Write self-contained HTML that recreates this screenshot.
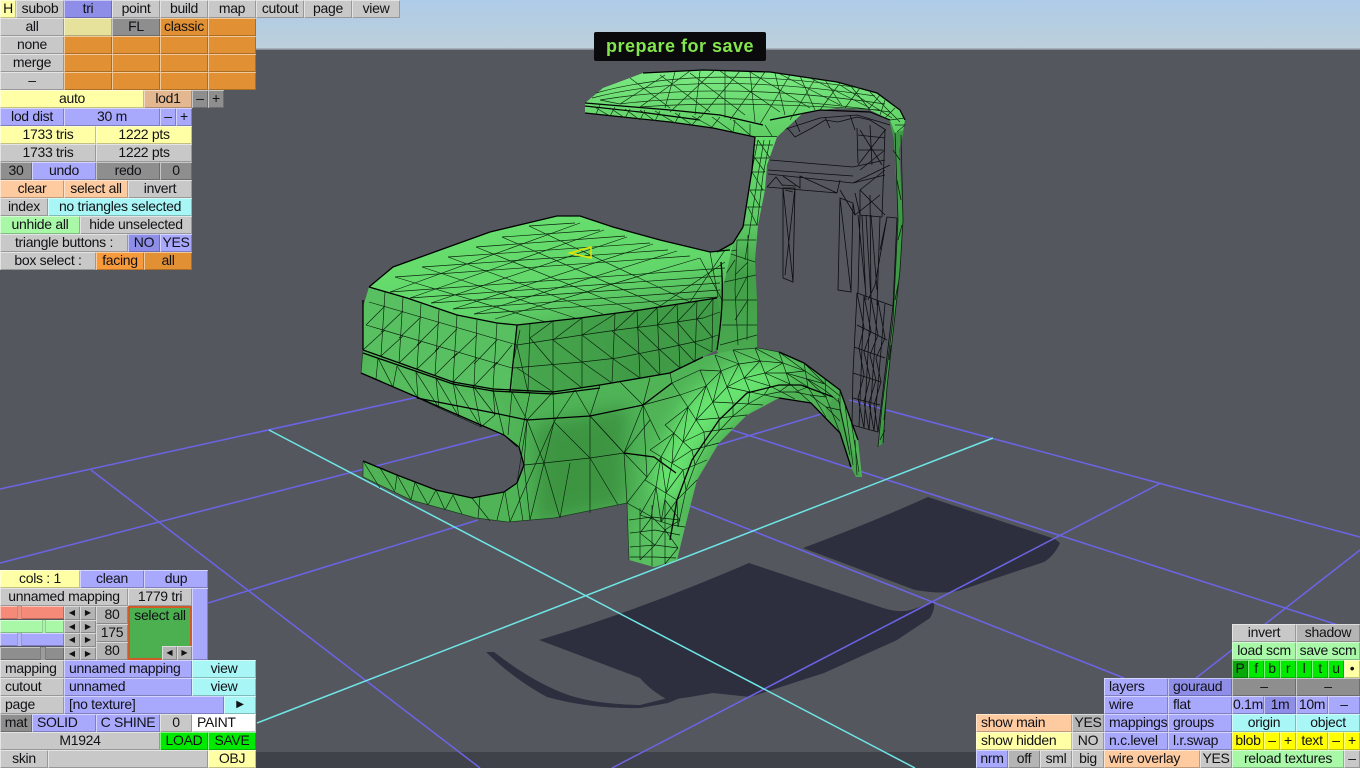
<!DOCTYPE html>
<html><head><meta charset="utf-8"><title>Mesh editor</title>
<style>
html,body{margin:0;padding:0;width:1360px;height:768px;overflow:hidden;background:#55575f}
#w{position:absolute;left:0;top:0;width:1360px;height:768px;overflow:hidden;filter:blur(.3px)}
#s{position:absolute;left:0;top:0}
i{position:absolute;height:18px;box-sizing:border-box;text-align:center;font:14px/17px "Liberation Sans",sans-serif;letter-spacing:-.3px;font-style:normal;color:#121216;white-space:pre;overflow:hidden;box-shadow:inset 1px 1px 0 rgba(255,255,255,.5),inset -1px -1px 0 rgba(0,0,0,.24)}
.g{background:#c8c8c8}.d{background:#8e8e8e}.b{background:#a8a8fc}.B{background:#8e8ee8}.y{background:#ffffa6}.p{background:#fdcb9f}.c{background:#a8f6f6}.n{background:#a8f8a8}.o{background:#e29034}.O{background:#f79a3c}.t{background:#e3b78f}.Y{background:#ffff00}.G{background:#00ea00}.W{background:#fff}.e{background:#e6e29c}.a{background:#b4b4b4}.D{background:#08a808}
.l{text-align:left;padding-left:5px}
.s{height:13.5px;line-height:13px;font-size:8px;letter-spacing:0}
.k{box-shadow:none}
</style></head><body><div id="w">
<svg id="s" width="1360" height="768" viewBox="0 0 1360 768">
<defs>
<linearGradient id="sky" x1="0" y1="0" x2="0" y2="1"><stop offset="0" stop-color="#aecbe8"/><stop offset="1" stop-color="#bdd0da"/></linearGradient>
<linearGradient id="top" x1="0" y1="0" x2=".75" y2="1"><stop offset="0" stop-color="#6ae270"/><stop offset=".7" stop-color="#62d66a"/><stop offset="1" stop-color="#4ba952"/></linearGradient>
<linearGradient id="fr" x1="0" y1="0" x2="1" y2="0"><stop offset="0" stop-color="#48a84e"/><stop offset=".6" stop-color="#3f9a46"/><stop offset="1" stop-color="#419c47"/></linearGradient>
<linearGradient id="ro" x1="0" y1="0" x2="0" y2="1"><stop offset="0" stop-color="#7cea82"/><stop offset="1" stop-color="#5ccc63"/></linearGradient>
<linearGradient id="pi" x1="0" y1="0" x2="0" y2="1"><stop offset="0" stop-color="#66dc6d"/><stop offset=".4" stop-color="#5cc864"/><stop offset=".62" stop-color="#429e48"/><stop offset="1" stop-color="#4aaa50"/></linearGradient>
<filter id="bl" x="-30%" y="-30%" width="160%" height="160%"><feGaussianBlur stdDeviation="9"/></filter>
<clipPath id="cb"><path d="M361 373L363 350L453 382L493 389L553 392L600 385L670 373L703 357L733 350L758 348L779 352L804 363L840 390L858 440L862 477L856 477L851 467L840 433L811 403L779 398L747 415L719 443L697 480L685 527L677 560L654 567L629 560L627 503L554 518L508 522L476 518L411 500L363 477L363 461L397 475L436 490L472 498L504 492L517 483L524 465L519 447L504 435L419 398Z"/></clipPath>
</defs>
<rect width="1360" height="49" fill="url(#sky)"/>
<rect y="48.5" width="1360" height="1.5" fill="#8a8f98"/>
<rect y="50" width="1360" height="702" fill="#55575f"/>
<rect x="0" y="752" width="1360" height="16" fill="#404249"/>
<!-- shadows -->
<g fill="#2d2f3e">
<path d="M928 497L1055 539L1060 543Q1054 556 1044 562L961 590Q945 595 915 590L803 548Q870 523 928 497Z"/>
<path d="M749 563L883 608Q900 613 911 610L934 602Q935 610 930 618L897 640L824 673L750 697L713 693L690 697L668 700Q650 690 640 678L539 640Q640 610 749 563Z"/>
<path d="M486 652L494 652Q530 680 563 693Q590 704 640 705L668 698L680 698L668 703L640 708Q590 709 547 697Q515 680 486 652Z"/>
</g>
<!-- grid -->
<g stroke="#6c64e6" stroke-width="1.5" fill="none">
<path d="M0 489L418 397M0 563L504 433M208 603L478 520M718 445L828 412M91 470L480 768"/>
<path d="M849 400L1360 537M732 430L1338 625M690 506L1124 678M612 768L1161 483M1196 678L1360 550"/>
</g>
<g stroke="#6fe6e6" stroke-width="1.5" fill="none">
<path d="M269 430L915 768M257 723L993 438"/>
</g>
<!-- wire-only rear structure -->
<g stroke="#0c0c10" stroke-width=".8" fill="none">
<path d="M783 130L820 118L857 115L890 125M785 125L795 137L812 128L825 120L838 122L857 117L870 120L886 130M795 120L800 132M825 117L830 128M850 115L855 130"/>
<path d="M857 128L858 163M860 130L882 165M885 130L858 165M885 130L882 217M870 125L872 165M858 135L885 138M858 150L883 150"/>
<path d="M770 160L853 167L885 160M768 170L853 176M768 174L853 183L885 175M767 187L837 193M767 187L776 177L783 186M783 176L800 188L800 176L837 193M837 193L840 180M853 183L890 165M860 170L885 150M885 170L860 190L885 215M860 190L860 215L882 217"/>
<path d="M783 188L795 188L793 282L783 278ZM783 188L793 282M795 188L785 275M783 185L796 186M785 190L793 192"/>
<path d="M840 198L853 203L851 292L838 290ZM840 198L851 292M853 203L855 215M840 190L855 215L880 195"/>
<path d="M855 193L860 215L858 293M862 215L866 300M870 195L871 300M880 217L877 305M858 215L866 295M866 215L871 300M871 215L877 290M887 217L875 285L868 300M897 218L887 217L880 250M897 218L893 306"/>
<path d="M857 293L853 373L852 425L878 432L893 306M857 293L893 306M857 325L887 340M854 347L885 358M853 373L881 382M853 398L880 405"/>
<path d="M864 296L859 427M871 298L864 428M878 301L869 430M885 304L874 431M857 293L864 327L859 348L864 375L858 398L864 428M864 296L871 331L864 352L870 378L864 402L869 430M871 298L878 335L870 355L876 380L869 403L874 431M878 301L885 338L876 358L881 382L874 405L878 432"/>
<path d="M847 450L852 468M849 440L856 470M843 425L850 466"/>
</g>
<!-- Door dark strip -->
<path d="M889 118L905 120L903 135L899 150L903 220L900 270L887 387L883 443L878 447L882 407L893 320L898 220L894 140Z" fill="#3f9a47"/>
<path d="M895 130L898 220L893 320L882 407L878 447M901 135L903 220L900 270L887 387L883 443M897 180L901 200M895 300L899 280M889 360L891 345M884 420L886 400M893 150L900 160M898 240L902 225M885 430L880 440" stroke="#0d1d0d" stroke-width=".8" fill="none"/>
<!-- Roof -->
<path d="M585 103L603 88L643 73L703 70L770 72L837 82L877 93L900 110L905 120L903 130L895 133L890 120L870 110L837 108L803 113L777 137L755 137L713 128L670 122L585 113Z" fill="url(#ro)"/>
<path d="M585 103L670 110L720 115L763 125M585 106L640 112L700 120M770 120L820 110L870 112L890 120M585 113L670 122L713 128L755 137L777 137" stroke="#000" stroke-width="1.2" fill="none"/>
<path d="M643 73L703 70L770 72L837 82L877 93L900 110L905 120" stroke="#000" stroke-width="1.3" fill="none"/>
<g stroke="#0d2d10" stroke-width=".65" fill="none">
<path d="M596 93Q700 64 860 88M592 98Q700 70 875 96M600 100Q720 80 885 104M620 104Q730 90 890 112M640 107Q730 100 880 110M665 75L620 104L600 100M690 71L640 107M715 70L670 112M740 71L700 118M765 72L730 120M790 75L760 124M815 79L790 120M840 83L820 110M860 88L845 108M880 95L868 110"/>
<path d="M630 78L670 108M660 75L710 112M690 73L745 115M720 71L780 112M750 72L810 108M780 74L840 105M810 78L870 108M840 85L892 118M870 92L900 122M675 72L665 108M700 71L695 115M725 71L725 118M750 72L755 122M775 73L785 115M800 76L815 110M825 80L842 106M850 85L870 110"/>
<path d="M600 105L596 114M615 107L610 116L596 108M630 109L625 118L610 108M645 110L640 120L625 109M660 111L655 121L640 110M680 113L675 123L655 111M700 116L692 125L675 113M720 117L712 127L692 116M735 120L733 132L712 117M750 124L750 135L733 120M765 125L772 136"/>
<path d="M890 120L905 118M895 125L905 125L897 132M885 100L880 115M895 108L885 118"/>
</g>
<!-- Pillar and body -->
<path d="M755 137L777 137L767 165L765 190L758 225L755 260L757 300L757 347L720 360L700 300L700 255L717 252L733 243L743 227L752 170Z" fill="url(#pi)"/>
<g stroke="#0d2d10" stroke-width=".7" fill="none">
<path d="M758 140L752 170L743 227M764 140L758 175L750 228L745 260M770 140L763 175L757 225M755 145L773 145M753 158L769 158M752 172L765 172M750 190L765 190M747 207L762 207M744 225L758 225M737 240L756 240M758 140L770 158M755 158L765 172M752 172L763 190M750 190L760 207M748 207L757 225M725 252L755 262M720 283L756 275M722 300L757 300M722 325L757 325M720 345L757 335M737 240L735 290L738 345M748 235L747 340M735 275L748 262M735 300L748 275M735 320L748 300M735 260L720 283M737 250L725 252"/>
</g>
<!-- lower body + fender -->
<path d="M361 373L363 350L453 382L493 389L553 392L600 385L670 373L703 357L733 350L758 348L779 352L804 363L840 390L858 440L862 477L856 477L851 467L840 433L811 403L779 398L747 415L719 443L697 480L685 527L677 560L654 567L629 560L627 503L554 518L508 522L476 518L411 500L363 477L363 461L397 475L436 490L472 498L504 492L517 483L524 465L519 447L504 435L419 398Z" fill="#50b457"/>
<g clip-path="url(#cb)">
<path d="M535 425L628 405L625 505L535 525Z" fill="#3d9543" filter="url(#bl)"/>
<path d="M652 470L690 395L740 362L800 365L770 392L730 415L700 450L680 500L655 505Z" fill="#68e470" filter="url(#bl)"/>
<path d="M365 360L500 400L500 435L365 375Z" fill="#58c060" filter="url(#bl)"/>
<path d="M640 515L690 515L680 570L630 570Z" fill="#5ac262" filter="url(#bl)"/>
<path d="M835 395L862 480L848 480L825 410Z" fill="#48a44f"/>
</g>
<!-- left face -->
<path d="M369 287L407 298L457 315L497 323L517 325L512 392L493 389L453 382L363 350L363 307Z" fill="#58c060"/>
<!-- front face -->
<path d="M517 325L580 318L640 310L717 298L722 317L717 350L703 357L670 373L600 385L553 392L512 392Z" fill="url(#fr)"/>
<!-- top -->
<path d="M369 287L393 267L440 250L490 232L557 216L580 216L613 227L660 240L710 252L730 250L733 243L725 280L717 298L640 310L580 318L517 325L497 323L457 315L407 298Z" fill="url(#top)"/>
<!-- wires -->
<g stroke="#08200c" stroke-width=".65" fill="none">
<path d="M390 292L580 223M410 298L604 230M431 303L627 237M453 309L653 244M474 314L677 251M495 319L700 258M395 277L546 322M422 267L575 318M448 257L603 314M476 247L632 310M502 237L661 306M529 226L690 302"/>
<path d="M395 277L690 256M422 267L668 250M448 257L650 243M476 247L625 236M502 237L600 230M529 226L575 223M390 292L725 268M410 298L722 276M431 303L720 283M453 309L720 290M474 314L718 297"/>
<path d="M700 258L722 300M710 252L718 297M725 250L690 302M725 262L660 306"/>
<!-- left face -->
<path d="M369 302L517 345M366 325L512 368M385 292L381 356M403 297L399 363M421 304L417 369M439 310L435 375M457 315L453 382M477 320L474 386M497 323L493 389M385 306L366 325M403 311L381 332M421 317L399 338M439 323L417 345M457 329L435 351M477 335L453 358M497 340L474 364M512 345L493 368M385 330L363 350M403 336L381 356M421 342L399 363M439 348L417 369M457 353L435 375M477 358L453 382M497 362L474 386"/>
<!-- front face -->
<path d="M517 345L582 335L617 330L657 325L703 318L720 312M513 368L582 362L617 358L657 350L703 340L718 335"/>
<path d="M530 323L528 392M553 321L553 392M582 318L582 388M615 314L612 383M637 310L640 378M657 308L660 375M677 304L680 368M697 301L695 362M713 299L712 352"/>
<path d="M553 321L530 338M582 318L553 340M615 314L582 335M637 310L615 330M657 308L637 328M677 304L657 325M697 301L677 322M713 299L697 319"/>
<path d="M530 338L553 365M553 340L582 362M582 335L612 358M612 331L640 354M637 328L660 350M657 325L680 346M677 322L695 343M697 319L713 338"/>
<path d="M517 368L553 392M553 365L582 388M582 362L612 383M612 358L640 378M640 354L660 375M660 350L680 368M680 346L695 362M695 343L712 352M517 345L528 392M520 330L512 368"/>
<!-- lower band -->
<path d="M378 358L376 379M397 366L393 387M416 372L418 398M436 378L439 408M453 382L459 417M473 386L481 427M493 389L495 415M378 358L393 387M397 366L418 398M416 372L439 408M436 378L459 417M453 382L481 427M473 386L495 415M493 389L504 435M512 392L508 435M530 392L519 447M553 392L554 422M575 390L554 422M575 390L590 416M600 385L590 416M620 382L643 405M650 378L643 405M670 373L672 383M512 392L527 420M553 392L527 420"/>
<!-- lower body triangulation -->
<path d="M527 420L524 465M527 420L544 463M554 422L544 463M554 422L590 458M590 416L590 458M590 416L624 453M643 405L624 453M524 465L544 463L590 458L624 453M524 465L530 520M544 463L530 520M544 463L560 518M560 518L570 463M590 458L590 513M590 458L618 505M624 453L627 503M527 420L517 483M504 435L517 447M554 422L510 522M505 492L510 522M517 483L523 521M504 492L497 520M472 498L490 521M480 497L478 518M453 495L462 514M436 490L445 510M415 482L428 505M397 475L411 500M380 468L395 492M363 461L380 488M397 475L395 490M415 482L411 500M436 490L428 505M453 495L445 510"/>
<path d="M643 405L647 477M590 416L624 453M624 453L654 457M643 405L680 395M643 405L660 440M624 453L650 420M624 453L647 477L627 503M672 383L680 395M672 383L700 370"/>
<path d="M361 373L376 379L393 387M418 398L439 408L459 417L481 427L495 415"/>
<!-- fender rows -->
<path d="M661 522L666 493L672 463L683 442L696 420L713 402L727 387L744 378L765 373L786 373L807 379L826 391L840 403"/>
<path d="M651 518L656 487L661 457L674 433L688 407L706 386L721 371L739 364L760 361L783 363L805 371L825 384L840 396"/>
<path d="M678 527L686 490L695 465L705 447L719 431L733 416L748 404L764 395L779 392L795 392L810 395L826 407L840 421"/>
<!-- radials -->
<path d="M685 527L672 525L640 515M697 480L677 500L645 480M707 460L683 470L650 450M719 443L692 450L665 425M733 428L704 432L680 395M747 415L719 418L700 370M763 405L733 403L715 355M779 398L750 392L733 350M795 399L770 386L755 348M811 403L790 384L779 352M826 417L808 387L804 363M840 433L826 397L825 378M850 455L840 410L840 390"/>
<path d="M677 500L661 522M683 470L666 493M692 450L672 463M704 432L683 442M719 418L696 420M733 403L713 402M750 392L727 387M770 386L744 378M790 384L765 373M808 387L786 373M826 397L807 379"/>
<path d="M661 522L656 487M666 493L661 457M672 463L674 433M683 442L688 407M696 420L706 386M713 402L721 371M727 387L739 364M744 378L760 361M765 373L783 363M786 373L805 371M807 379L825 384"/>
<path d="M656 487L640 515M661 457L645 480M674 433L650 450M688 407L665 425M706 386L680 395M721 371L700 370M739 364L715 355M760 361L733 350M783 363L755 348M805 371L779 352M825 384L804 363"/>
<path d="M678 527L677 500M686 490L683 470M695 465L692 450M705 447L704 432M719 431L719 418M733 416L733 403M748 404L750 392M764 395L770 386M779 392L790 384M795 392L808 387M810 395L826 397M826 407L840 410"/>
<path d="M845 405L853 465M851 420L859 472M838 398L849 450M855 440L857 475"/>
<!-- leg -->
<path d="M629 520L652 517L680 520M630 533L655 530L680 535M630 547L655 545L678 548M630 557L655 557L676 558M640 508L640 560M652 505L652 566M665 500L665 564M627 503L652 517L640 533L655 545L640 560M652 517L665 530L655 545M665 500L680 520L665 530L678 548L665 564"/>
</g>
<!-- heavy lines -->
<g stroke="#000" stroke-width="1.3" fill="none">
<path d="M369 287L393 267L440 250L490 232L557 216L580 216L613 227L660 240L710 252L730 250"/>
<path d="M369 287L407 298L457 315L497 323L517 325L580 318L640 310L717 298"/>
<path d="M363 350L453 382L493 389L553 392L600 385L670 373L703 357"/>
<path d="M363 353L453 384L493 391L553 394L600 388"/>
<path d="M417 398L494 413L527 420L590 416L643 405L672 383"/>
<path d="M361 373L419 398L504 435L519 447L524 465L517 483L504 492L472 498L436 490L397 475L363 461"/>
<path d="M670 540L677 500L692 460L719 420L747 393L779 385L801 385L833 397"/>
<path d="M721 262Q725 300 717 350"/>
<path d="M363 300L363 350M517 325L510 392M733 243L717 252M743 227L733 243M752 170L743 227M755 137L752 170"/>
<path d="M779 352L804 363L840 390L858 440M779 398L811 403L840 433L851 467M624 453L654 457L676 473"/>
</g>
<path d="M363 461L363 477L411 500L476 518L508 522L554 518L627 503M627 503L629 560M361 373L363 350M733 350L758 348L779 352" stroke="#1a3a1e" stroke-width=".7" fill="none"/>
<path d="M570 253L591 247L591 258Z" fill="none" stroke="#e4e400" stroke-width="1.5"/>
</svg>

<div style="position:absolute;left:594px;top:32px;width:172px;height:29px;background:#0a0a0c;border-radius:2px;text-align:center;font:bold 18px/28px 'Liberation Sans',sans-serif;letter-spacing:.5px;color:#84e64e">prepare for save</div>

<i class="y" style="left:0;top:0;width:16px">H</i><i class="g" style="left:16px;top:0;width:48px">subob</i><i class="B" style="left:64px;top:0;width:48px">tri</i><i class="g" style="left:112px;top:0;width:48px">point</i><i class="g" style="left:160px;top:0;width:48px">build</i><i class="g" style="left:208px;top:0;width:48px">map</i><i class="g" style="left:256px;top:0;width:48px">cutout</i><i class="g" style="left:304px;top:0;width:48px">page</i><i class="g" style="left:352px;top:0;width:48px">view</i>
<i class="g" style="left:0;top:18px;width:64px">all</i><i class="e" style="left:64px;top:18px;width:48px"></i><i class="d" style="left:112px;top:18px;width:48px">FL</i><i class="o" style="left:160px;top:18px;width:48px">classic</i><i class="o" style="left:208px;top:18px;width:48px"></i>
<i class="g" style="left:0;top:36px;width:64px">none</i><i class="o" style="left:64px;top:36px;width:48px"></i><i class="o" style="left:112px;top:36px;width:48px"></i><i class="o" style="left:160px;top:36px;width:48px"></i><i class="o" style="left:208px;top:36px;width:48px"></i>
<i class="g" style="left:0;top:54px;width:64px">merge</i><i class="o" style="left:64px;top:54px;width:48px"></i><i class="o" style="left:112px;top:54px;width:48px"></i><i class="o" style="left:160px;top:54px;width:48px"></i><i class="o" style="left:208px;top:54px;width:48px"></i>
<i class="g" style="left:0;top:72px;width:64px">–</i><i class="o" style="left:64px;top:72px;width:48px"></i><i class="o" style="left:112px;top:72px;width:48px"></i><i class="o" style="left:160px;top:72px;width:48px"></i><i class="o" style="left:208px;top:72px;width:48px"></i>
<i class="y" style="left:0;top:90px;width:144px">auto</i><i class="t" style="left:144px;top:90px;width:48px">lod1</i><i class="d" style="left:192px;top:90px;width:16px">–</i><i class="d" style="left:208px;top:90px;width:16px">+</i>
<i class="b" style="left:0;top:108px;width:64px">lod dist</i><i class="b" style="left:64px;top:108px;width:96px">30 m</i><i class="b" style="left:160px;top:108px;width:16px">–</i><i class="b" style="left:176px;top:108px;width:16px">+</i>
<i class="y" style="left:0;top:126px;width:96px">1733 tris</i><i class="y" style="left:96px;top:126px;width:96px">1222 pts</i>
<i class="g" style="left:0;top:144px;width:96px">1733 tris</i><i class="g" style="left:96px;top:144px;width:96px">1222 pts</i>
<i class="d" style="left:0;top:162px;width:32px">30</i><i class="b" style="left:32px;top:162px;width:64px">undo</i><i class="d" style="left:96px;top:162px;width:64px">redo</i><i class="d" style="left:160px;top:162px;width:32px">0</i>
<i class="p" style="left:0;top:180px;width:64px">clear</i><i class="p" style="left:64px;top:180px;width:64px">select all</i><i class="g" style="left:128px;top:180px;width:64px">invert</i>
<i class="g" style="left:0;top:198px;width:48px">index</i><i class="c" style="left:48px;top:198px;width:144px">no triangles selected</i>
<i class="n" style="left:0;top:216px;width:80px">unhide all</i><i class="g" style="left:80px;top:216px;width:112px">hide unselected</i>
<i class="g" style="left:0;top:234px;width:128px">triangle buttons :</i><i class="B" style="left:128px;top:234px;width:32px">NO</i><i class="b" style="left:160px;top:234px;width:32px">YES</i>
<i class="g" style="left:0;top:252px;width:96px">box select :</i><i class="O" style="left:96px;top:252px;width:48px">facing</i><i class="o" style="left:144px;top:252px;width:48px">all</i>

<i class="y" style="left:0;top:570px;width:80px">cols : 1</i><i class="b" style="left:80px;top:570px;width:64px">clean</i><i class="b" style="left:144px;top:570px;width:64px">dup</i>
<i class="g" style="left:0;top:588px;width:128px">unnamed mapping</i><i class="g" style="left:128px;top:588px;width:64px">1779 tri</i><i class="b" style="left:192px;top:588px;width:16px;height:72px"></i>
<i style="left:0;top:606px;width:64px;height:13px;background:#f58a78"></i><i class="k" style="left:17px;top:606px;width:5px;height:13px;background:#ee9484;border-left:1px solid #d88070;border-right:1px solid #d88070"></i>
<i style="left:0;top:619.5px;width:64px;height:13px;background:#a8f8a8"></i><i class="k" style="left:42px;top:619.5px;width:4px;height:13px;background:#b0f0ac;border-left:1px solid #90d090;border-right:1px solid #90d090"></i>
<i style="left:0;top:633px;width:64px;height:13px;background:#a8a8fc"></i><i class="k" style="left:17px;top:633px;width:5px;height:13px;background:#b4b4f6;border-left:1px solid #9696e0;border-right:1px solid #9696e0"></i>
<i style="left:0;top:646.5px;width:64px;height:13.5px;background:#8e8e8e"></i><i class="k" style="left:40px;top:646.5px;width:6px;height:13.5px;background:#9c9c9c;border-left:1px solid #7c7c7c;border-right:1px solid #7c7c7c"></i>
<i class="a s" style="left:64px;top:606px;width:16px">◀</i><i class="a s" style="left:80px;top:606px;width:16px">▶</i><i class="a s" style="left:64px;top:619.5px;width:16px">◀</i><i class="a s" style="left:80px;top:619.5px;width:16px">▶</i><i class="a s" style="left:64px;top:633px;width:16px">◀</i><i class="a s" style="left:80px;top:633px;width:16px">▶</i><i class="a s" style="left:64px;top:646.5px;width:16px">◀</i><i class="a s" style="left:80px;top:646.5px;width:16px">▶</i>
<i class="a" style="left:96px;top:606px;width:32px">80</i><i class="a" style="left:96px;top:624px;width:32px">175</i><i class="a" style="left:96px;top:642px;width:32px">80</i>
<i class="k" style="left:128px;top:606px;width:64px;height:54px;background:#4caf50;border:2px solid #d05a28;line-height:15px">select all</i>
<i class="a s" style="left:162px;top:646px;width:15px;height:14px">◀</i><i class="a s" style="left:177px;top:646px;width:15px;height:14px">▶</i>
<i class="g l" style="left:0;top:660px;width:64px">mapping</i><i class="b l" style="left:64px;top:660px;width:128px">unnamed mapping</i><i class="c" style="left:192px;top:660px;width:64px">view</i>
<i class="g l" style="left:0;top:678px;width:64px">cutout</i><i class="b l" style="left:64px;top:678px;width:128px">unnamed</i><i class="c" style="left:192px;top:678px;width:64px">view</i>
<i class="g l" style="left:0;top:696px;width:64px">page</i><i class="b l" style="left:64px;top:696px;width:160px">[no texture]</i><i class="c" style="left:224px;top:696px;width:32px;font-size:10px">▶</i>
<i class="d" style="left:0;top:714px;width:32px">mat</i><i class="b l" style="left:32px;top:714px;width:64px">SOLID</i><i class="b" style="left:96px;top:714px;width:64px">C SHINE</i><i class="g" style="left:160px;top:714px;width:32px">0</i><i class="W l" style="left:192px;top:714px;width:64px">PAINT</i>
<i class="g" style="left:0;top:732px;width:160px">M1924</i><i class="G" style="left:160px;top:732px;width:48px">LOAD</i><i class="G" style="left:208px;top:732px;width:48px">SAVE</i>
<i class="g" style="left:0;top:750px;width:48px">skin</i><i class="g" style="left:48px;top:750px;width:160px"></i><i class="y" style="left:208px;top:750px;width:48px">OBJ</i>

<i class="g" style="left:1232px;top:624px;width:64px">invert</i><i class="a" style="left:1296px;top:624px;width:64px">shadow</i>
<i class="n" style="left:1232px;top:642px;width:64px">load scm</i><i class="n" style="left:1296px;top:642px;width:64px">save scm</i>
<i class="D" style="left:1232px;top:660px;width:16px">P</i><i class="G" style="left:1248px;top:660px;width:16px">f</i><i class="G" style="left:1264px;top:660px;width:16px">b</i><i class="G" style="left:1280px;top:660px;width:16px">r</i><i class="G" style="left:1296px;top:660px;width:16px">l</i><i class="G" style="left:1312px;top:660px;width:16px">t</i><i class="G" style="left:1328px;top:660px;width:16px">u</i><i class="y" style="left:1344px;top:660px;width:16px">•</i>
<i class="b l" style="left:1104px;top:678px;width:64px">layers</i><i class="B l" style="left:1168px;top:678px;width:64px">gouraud</i><i class="d" style="left:1232px;top:678px;width:64px">–</i><i class="d" style="left:1296px;top:678px;width:64px">–</i>
<i class="b l" style="left:1104px;top:696px;width:64px">wire</i><i class="b l" style="left:1168px;top:696px;width:64px">flat</i><i class="b" style="left:1232px;top:696px;width:32px">0.1m</i><i class="B" style="left:1264px;top:696px;width:32px">1m</i><i class="b" style="left:1296px;top:696px;width:32px">10m</i><i class="b" style="left:1328px;top:696px;width:32px">–</i>
<i class="p l" style="left:976px;top:714px;width:96px">show main</i><i class="a" style="left:1072px;top:714px;width:32px">YES</i><i class="b l" style="left:1104px;top:714px;width:64px">mappings</i><i class="b l" style="left:1168px;top:714px;width:64px">groups</i><i class="c" style="left:1232px;top:714px;width:64px">origin</i><i class="c" style="left:1296px;top:714px;width:64px">object</i>
<i class="y l" style="left:976px;top:732px;width:96px">show hidden</i><i class="g" style="left:1072px;top:732px;width:32px">NO</i><i class="b l" style="left:1104px;top:732px;width:64px">n.c.level</i><i class="b l" style="left:1168px;top:732px;width:64px">l.r.swap</i><i class="Y" style="left:1232px;top:732px;width:32px">blob</i><i class="Y" style="left:1264px;top:732px;width:16px">–</i><i class="Y" style="left:1280px;top:732px;width:16px">+</i><i class="Y" style="left:1296px;top:732px;width:32px">text</i><i class="Y" style="left:1328px;top:732px;width:16px">–</i><i class="Y" style="left:1344px;top:732px;width:16px">+</i>
<i class="b" style="left:976px;top:750px;width:32px">nrm</i><i class="a" style="left:1008px;top:750px;width:32px">off</i><i class="g" style="left:1040px;top:750px;width:32px">sml</i><i class="g" style="left:1072px;top:750px;width:32px">big</i><i class="p l" style="left:1104px;top:750px;width:96px">wire overlay</i><i class="g" style="left:1200px;top:750px;width:32px">YES</i><i class="n" style="left:1232px;top:750px;width:112px">reload textures</i><i class="g" style="left:1344px;top:750px;width:16px">–</i>
</div></body></html>
